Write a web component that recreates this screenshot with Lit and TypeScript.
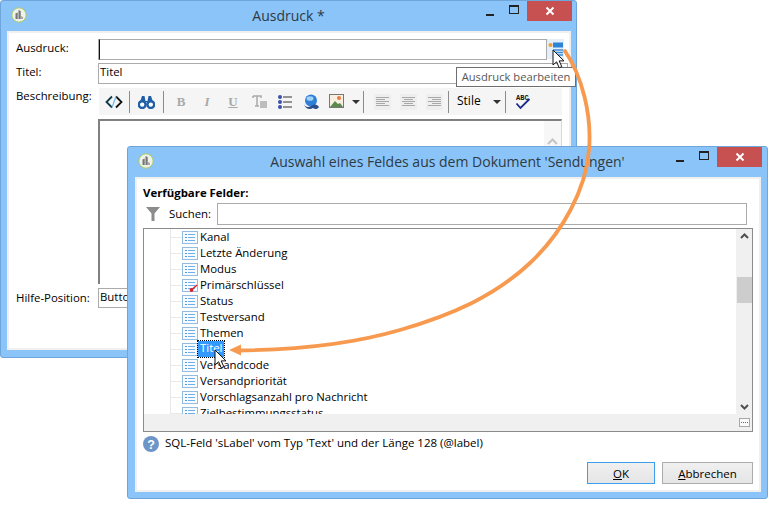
import { LitElement, html, css, svg } from "lit";
import { customElement } from "lit/decorators.js";

const ROWS = ["Kanal", "Letzte Änderung", "Modus", "Primärschlüssel", "Status", "Testversand", "Themen", "Titel", "Versandcode", "Versandpriorität", "Vorschlagsanzahl pro Nachricht", "Zielbestimmungsstatus"];

const appIcon = html`<svg class="appicon" width="16" height="16" viewBox="0 0 16 16"><circle cx="8" cy="8" r="7.2" fill="#eef2ea" stroke="#a8c860" stroke-width="1"/><path d="M4.5 12V6.5l2.2-1V12zM7.5 12V3l2.2 1v8z" fill="#777"/><path d="M10 9l2 1v2h-2z" fill="#aaa"/></svg>`;

const controls = html`<div class="controls">
  <div class="ctl"><svg width="10" height="10" viewBox="0 0 10 10"><rect x="1" y="7" width="8" height="2" fill="#222"/></svg></div>
  <div class="ctl max"><svg width="10" height="9" viewBox="0 0 10 9"><rect x=".5" y=".5" width="9" height="8" fill="none" stroke="#222"/><rect x="0" y="0" width="10" height="2" fill="#222"/></svg></div>
  <div class="close"><svg width="10" height="10" viewBox="0 0 10 10"><path d="M1.5 1.5l7 7M8.5 1.5l-7 7" stroke="#fff" stroke-width="2"/></svg></div>
</div>`;

const rowIcon = (key: boolean) => html`<svg class="ricon" width="16" height="13" viewBox="0 0 16 13">
  <rect x=".5" y=".5" width="15" height="12" fill="#f8fbfe" stroke="#93bce2"/>
  <path d="M3 3.5h2M3 6.5h2M3 9.5h2" stroke="#4a9ce6" stroke-width="1.2"/>
  <path d="M6 3.5h7M6 6.5h7M6 9.5h7" stroke="#6db0ec" stroke-width="1.1"/>
  ${key ? svg`<circle cx="9.5" cy="11" r="1.9" fill="#e0202a"/><path d="M10.5 10L15 6" stroke="#e0202a" stroke-width="1.5"/>` : ""}
</svg>`;

const align = (kind: string) => {
  const xs = kind === "l" ? [[2, 15], [2, 11], [2, 15], [2, 11], [2, 15]] : kind === "c" ? [[2, 15], [4, 13], [2, 15], [4, 13], [2, 15]] : [[2, 15], [6, 15], [2, 15], [6, 15], [2, 15]];
  return html`<span class="btn"><svg class="alignbg" width="17" height="16" viewBox="0 0 17 16"><rect width="17" height="16" fill="#eeeeee"/>${xs.map((p, i) => svg`<path d="M${p[0]} ${3.5 + i * 2}H${p[1]}" stroke="#a8a8a8"/>`)}</svg></span>`;
};

const cursor = html`<svg width="14" height="20" viewBox="0 0 14 20"><path d="M1 1v15l3.6-3.2 2.6 6 2.6-1.1-2.6-5.8H12z" fill="#fff" stroke="#111" stroke-width="1"/></svg>`;

@customElement("app-root")
export class AppRoot extends LitElement {
  static styles = css`
    :host { display: block; position: relative; width: 784px; height: 515px; background: #fff; overflow: hidden; font-family: "Open Sans", "Liberation Sans", sans-serif; font-size: 11.4px; color: #000; }
    .win { position: absolute; box-sizing: border-box; background: #8ac4f8; border: 1px solid #6ea6dc; border-radius: 3px; display: flex; flex-direction: column; }
    .w1 { left: 0; top: 0; width: 577px; height: 358px; padding: 0 5px 7px 6px; }
    .w2 { left: 127px; top: 146px; width: 641px; height: 353px; padding: 0 6px 6px 7px; }
    .title { height: 30px; flex: none; display: grid; grid-template-columns: 1fr auto 1fr; margin: 0 -5px 0 -6px; }
    .w2 .title { margin: 0 -6px 0 -7px; }
    .title .t { font-size: 14px; color: #2f3a44; line-height: 29px; white-space: nowrap; font-family: "Open Sans", sans-serif; }
    .appicon { margin: 6px 0 0 10px; }
    .controls { display: flex; justify-content: flex-end; justify-self: end; padding-right: 4px; }
    .w2 .controls { padding-right: 5px; }
    .ctl { width: 26px; height: 20px; display: flex; align-items: center; justify-content: center; padding-top: 1px; box-sizing: border-box; }
    .max { height: 20px; padding-top: 0; padding-bottom: 4px; width: 21px; margin-right: 3px; }
    .close { width: 45px; height: 20px; background: #c75050; display: flex; align-items: center; justify-content: center; }
    .client { flex: 1; background: #fff; border: 2px solid #f0f0f0; box-sizing: border-box; min-height: 0; }
    .form { display: grid; grid-template-columns: 82px 1fr; grid-template-rows: 20px 21px 27px 165px 20px; row-gap: 4px; padding: 6px 0 0 7px; position: relative; }
    .form .lab { line-height: 17px; white-space: nowrap; }
    .form .lab.down { line-height: 19px; }
    .form .lab.up { line-height: 15px; }
    .input { box-sizing: border-box; border: 1px solid #ababab; background: #fff; padding: 0 1px; line-height: 16px; white-space: nowrap; overflow: hidden; }
    .r1 { display: flex; gap: 0; margin-bottom: -1px; }
    .r1 .input { border-left: 1px solid #111; box-shadow: -1px 0 0 #ababab; margin-left: 1px; width: 448px; }
    .edit { width: 17px; height: 20px; background: #e3effb; display: flex; align-items: center; justify-content: center; }
    .r2 { width: 470px; }
    .toolbar { width: 463px; margin-left: 1px; background: #f5f5f5; display: flex; align-items: center; padding-left: 2px; box-sizing: border-box; }
    .btn { width: 26px; height: 27px; display: flex; align-items: center; justify-content: center; flex: none; }
    .bin { width: 33px; }
    .dd { width: 12px; }
    .dd2 { width: 14px; }
    .sep { width: 1px; height: 22px; background: #8c8c8c; margin-left: 2px; flex: none; }
    .sep.s2 { margin-left: 0; margin-right: 4px; }
    .sep.s3 { margin-left: 1px; margin-right: 5px; }
    .sep.s4 { margin-left: 1px; }
    .stile { width: 41px; padding: 0 0 2px 8px; box-sizing: border-box; font-size: 12px; justify-content: flex-start; }
    .fmt { font-family: "Liberation Serif", serif; font-weight: bold; font-size: 13px; color: #a9a9a9; }
    .fmt.i { font-style: italic; }
    .fmt.u { text-decoration: underline; }
    .tri { width: 0; height: 0; border: 4px solid transparent; border-top: 4px solid #333; border-bottom: 0; }
    .editor { width: 464px; box-sizing: border-box; border-top: 2px solid #808080; border-left: 2px solid #808080; border-right: 1px solid #d8d8d8; background: #fff; display: flex; justify-content: flex-end; }
    .escroll { width: 17px; background: #f7f7f7; display: flex; justify-content: center; padding-top: 17px; box-sizing: border-box; }
    .help { width: 300px; }
    .heading { font-weight: bold; line-height: 16px; height: 16px; }
    .body2 { padding: 6px 6px 0 6px; display: flex; flex-direction: column; height: 100%; box-sizing: border-box; }
    .search { display: flex; align-items: center; height: 22px; margin-top: 2px; }
    .funnel { margin-left: 3px; width: 23px; flex: none; }
    .search .lb { width: 48px; flex: none; margin-bottom: 2px; }
    .search .input { width: 530px; height: 22px; }
    .tree { margin-top: 3px; width: 610px; height: 204px; box-sizing: border-box; border: 1px solid #8b8b8b; display: grid; grid-template-columns: 1fr 16px; grid-template-rows: 1fr 17px; background: #fff; }
    .list { position: relative; overflow: hidden; min-width: 0; background: linear-gradient(#e8e8e8, #e8e8e8) 26px 0 / 1px 100% no-repeat; }
    .row { height: 16px; display: flex; align-items: center; padding-left: 27px; white-space: nowrap; }
    .row .dash { width: 11px; height: 1px; background: #e8e8e8; flex: none; }
    .ricon { flex: none; margin-right: 1px; }
    .row .tx { line-height: 15px; padding: 0 1px; margin-bottom: 2px; }
    .row .tx.sel { background: #3399ff; color: #fff; outline: 1px dotted #000; padding: 0 2px; height: 16px; line-height: 14px; margin: 0 0 0 -1px; }
    .vscroll { background: #f0f0f0; display: flex; flex-direction: column; align-items: center; justify-content: space-between; position: relative; padding: 4px 0; box-sizing: border-box; }
    .thumb { position: absolute; left: 1px; right: 0; top: 48px; height: 26px; background: #cdcdcd; }
    .hbar { background: #f0f0f0; }
    .corner { background: #f0f0f0; display: flex; align-items: center; justify-content: center; }
    .status { display: flex; align-items: center; gap: 6px; height: 19px; margin-top: 2px; }
    .status span { margin-bottom: 2px; font-size: 11.5px; }
    .buttons { display: flex; justify-content: flex-end; gap: 7px; width: 610px; margin-top: 9px; }
    .b { box-sizing: border-box; height: 22px; background: linear-gradient(#f0f0f0, #e5e5e5); border: 1px solid #acacac; display: flex; align-items: center; justify-content: center; font-size: 11.5px; }
    .b.ok { width: 68px; border: 1px solid #3c9ef0; }
    .b.ab { width: 91px; }
    .b u { text-decoration: underline; }
    .tip { position: absolute; left: 456px; top: 67px; width: 120px; height: 20px; box-sizing: border-box; border: 1px solid #6e6e6e; background: #fff; color: #575757; font-size: 11.2px; line-height: 18px; text-align: center; white-space: nowrap; }
    .cur { position: absolute; display: block; }
    .c1 { left: 552px; top: 49px; }
    .c2 { left: 214px; top: 349px; }
    .arrow { position: absolute; left: 0; top: 0; pointer-events: none; }
  `;

  render() {
    return html`
      <div class="win w1">
        <div class="title"><div>${appIcon}</div><div class="t">Ausdruck *</div>${controls}</div>
        <div class="client">
          <div class="form">
            <div class="lab">Ausdruck:</div>
            <div class="r1"><div class="input"></div>
              <div class="edit"><svg width="16" height="16" viewBox="0 0 16 16"><circle cx="2.5" cy="4" r="2" fill="#f0a030"/><rect x="5" y="1.5" width="10" height="5" fill="#2d83d6"/><path d="M5 9h10M5 11.5h10M5 14h10" stroke="#3f8fd8" stroke-width="1.3"/></svg></div>
            </div>
            <div class="lab">Titel:</div>
            <div class="input r2">Titel</div>
            <div class="lab up">Beschreibung:</div>
            <div class="toolbar">
              <span class="btn"><svg width="18" height="14" viewBox="0 0 18 14"><path d="M7 1.5L1.5 7 7 12.5" fill="none" stroke="#0d3b4a" stroke-width="1.8"/><path d="M11 1.5L16.5 7 11 12.5" fill="none" stroke="#111" stroke-width="1.8"/><path d="M7 12.5L11 1.5" stroke="#6fb8e8" stroke-width="1.2"/></svg></span>
              <span class="sep"></span>
              <span class="btn bin"><svg width="17" height="14" viewBox="0 0 17 14"><circle cx="4.2" cy="9.6" r="3.4" fill="#fff" stroke="#1f5fa8" stroke-width="2.4"/><circle cx="12.8" cy="9.6" r="3.4" fill="#fff" stroke="#1f5fa8" stroke-width="2.4"/><path d="M2 7l2-6h2.5l1 5h2l1-5H13l2 6z" fill="#1f5fa8"/></svg></span>
              <span class="sep s2"></span>
              <span class="btn fmt">B</span>
              <span class="btn fmt i">I</span>
              <span class="btn fmt u">U</span>
              <span class="btn"><svg width="15" height="13" viewBox="0 0 15 13"><path d="M1 1h8v2M5 1v10M3 11h4M1 1v2" fill="none" stroke="#a9a9a9" stroke-width="1.5"/><rect x="8" y="6" width="7" height="7" fill="#bdbdbd"/></svg></span>
              <span class="btn"><svg width="14" height="16" viewBox="0 0 14 16"><circle cx="2" cy="3" r="2" fill="#3d4fa8"/><circle cx="2" cy="8" r="2" fill="#3d4fa8"/><circle cx="2" cy="13" r="2" fill="#3d4fa8"/><path d="M5 3h9M5 8h9M5 13h9" stroke="#333" stroke-width="1.2"/></svg></span>
              <span class="btn"><svg width="17" height="16" viewBox="0 0 17 16"><circle cx="8" cy="6.5" r="6" fill="#2f7fd8"/><ellipse cx="7" cy="4.5" rx="3.5" ry="2.3" fill="#9fd0f5"/><path d="M1 10c1 3 4 4 7 2l2-1c2-1 5 0 6 2-1 2-4 3-6 1-3 2-8 1-9-4z" fill="#2a4f8a"/></svg></span>
              <span class="btn"><svg width="16" height="15" viewBox="0 0 16 15"><rect x=".5" y=".5" width="14" height="13" fill="#f8efe0" stroke="#777"/><path d="M1 13l5-6 3 3 2-1 3 4z" fill="#5a8a50"/><circle cx="10" cy="4" r="2" fill="#e87a3a"/></svg></span>
              <span class="btn dd"><span class="tri"></span></span>
              <span class="sep s3"></span>
              ${align("l")}${align("c")}${align("r")}
              <span class="sep s4"></span>
              <span class="btn stile">Stile</span>
              <span class="btn dd2"><span class="tri"></span></span>
              <span class="sep s4"></span>
              <span class="btn bin"><svg width="16" height="17" viewBox="0 0 16 17"><text x="1" y="6.5" font-family="Liberation Mono, monospace" font-size="7" font-weight="bold" fill="#111">ABC</text><path d="M1.5 10.5l4 4.5L14.5 6" fill="none" stroke="#1a2a8a" stroke-width="1.8"/></svg></span>
            </div>
            <div></div>
            <div class="editor"><div class="escroll"><svg width="11" height="7" viewBox="0 0 11 7"><path d="M1 6l4.5-4.5L10 6" fill="none" stroke="#c4c4c4" stroke-width="2"/></svg></div></div>
            <div class="lab down">Hilfe-Position:</div>
            <div class="input help">Button</div>
          </div>
        </div>
      </div>

      <div class="win w2">
        <div class="title"><div>${appIcon}</div><div class="t">Auswahl eines Feldes aus dem Dokument 'Sendungen'</div>${controls}</div>
        <div class="client">
          <div class="body2">
            <div class="heading">Verfügbare Felder:</div>
            <div class="search">
              <div class="funnel"><svg width="14" height="14" viewBox="0 0 14 14" display="block"><path d="M0 0h14L8.5 6.5V14h-3V6.5z" fill="#8c8c8c"/></svg></div>
              <div class="lb">Suchen:</div>
              <div class="input"></div>
            </div>
            <div class="tree">
              <div class="list">
                ${ROWS.map((r) => html`<div class="row"><span class="dash"></span>${rowIcon(r === "Primärschlüssel")}<span class="tx ${r === "Titel" ? "sel" : ""}">${r}</span></div>`)}
              </div>
              <div class="vscroll">
                <svg width="9" height="6" viewBox="0 0 9 6"><path d="M1 5l3.5-3.5L8 5" fill="none" stroke="#505050" stroke-width="2"/></svg>
                <div class="thumb"></div>
                <svg width="9" height="6" viewBox="0 0 9 6"><path d="M1 1l3.5 3.5L8 1" fill="none" stroke="#505050" stroke-width="2"/></svg>
              </div>
              <div class="hbar"></div>
              <div class="corner"><svg width="11" height="9" viewBox="0 0 11 9"><rect x=".5" y=".5" width="10" height="8" fill="#fafafa" stroke="#a8a8a8"/><path d="M2 4.5h7" stroke="#666" stroke-dasharray="1 1"/></svg></div>
            </div>
            <div class="status">
              <svg width="16" height="16" viewBox="0 0 16 16"><circle cx="8" cy="8" r="8" fill="#6e95c8"/><text x="8" y="12.5" text-anchor="middle" font-family="Liberation Sans, sans-serif" font-size="12.5" font-weight="bold" fill="#fff">?</text></svg>
              <span>SQL-Feld 'sLabel' vom Typ 'Text' und der Länge 128 (@label)</span>
            </div>
            <div class="buttons">
              <div class="b ok"><span><u>O</u>K</span></div>
              <div class="b ab"><span><u>A</u>bbrechen</span></div>
            </div>
          </div>
        </div>
      </div>

      <div class="tip">Ausdruck bearbeiten</div>
      <svg class="arrow" width="784" height="515" viewBox="0 0 784 515">
        <path d="M565 51C582 76 592 115 589 150C586 190 562 233 530 263C495 296 452 315 400 330C345 346 290 350 238 350.5" fill="none" stroke="#f79a4f" stroke-width="3.8" stroke-linecap="round"/>
        <path d="M229 350L241 344.5V355.5z" fill="#f79a4f"/>
      </svg>
      <div class="cur c1">${cursor}</div>
      <div class="cur c2">${cursor}</div>
    `;
  }
}
